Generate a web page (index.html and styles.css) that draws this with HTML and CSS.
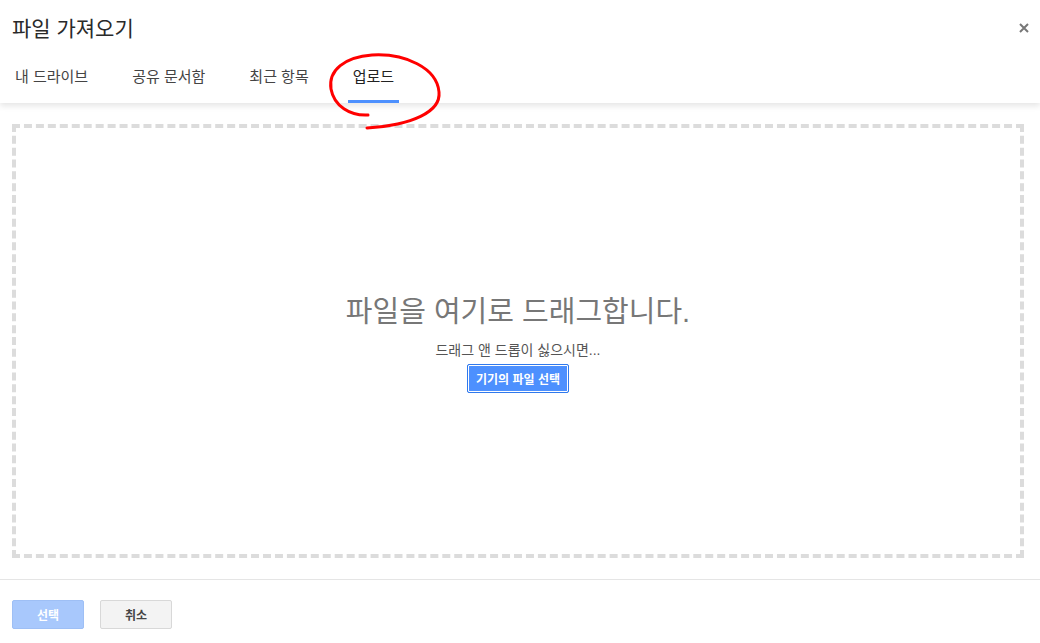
FILE: index.html
```html
<!DOCTYPE html>
<html lang="ko">
<head>
    <meta charset="UTF-8">
    <title>파일 가져오기</title>
    <link rel="stylesheet" href="styles.css">
</head>
<body>
    <div class="dialog">
        <!-- 상단 -->
        <div class="header">
            <div class="title-row">
                <div class="title">파일 가져오기</div>
                <button class="close" aria-label="닫기">
                    <svg width="10" height="10" viewBox="0 0 10 10"><path d="M1 1L9 9M9 1L1 9" stroke="#777" stroke-width="2"/></svg>
                </button>
            </div>
            <div class="tabs">
                <div class="tab">내 드라이브</div>
                <div class="tab">공유 문서함</div>
                <div class="tab">최근 항목</div>
                <div class="tab active">업로드</div>
            </div>
        </div>

        <!-- 업로드 영역 -->
        <div class="main">
            <div class="dropzone">
                <div class="drop-title">파일을 여기로 드래그합니다.</div>
                <div class="drop-sub">드래그 앤 드롭이 싫으시면...</div>
                <button class="pick">기기의 파일 선택</button>
            </div>
        </div>

        <!-- 하단 버튼 -->
        <div class="footer">
            <button class="btn btn-select" disabled>선택</button>
            <button class="btn btn-cancel">취소</button>
        </div>

        <!-- 빨간 표시 -->
        <svg class="mark" width="1040" height="643" viewBox="0 0 1040 643">
            <path d="M368 115 C350 116 334 106 331 89 C328 70 345 57 372 55 C405 53 437 68 439 92 C441 112 412 125 367 128" fill="none" stroke="#f00" stroke-width="3" stroke-linecap="round"/>
        </svg>
    </div>
</body>
</html>
```

FILE: styles.css
```css
body {
    margin: 0;
    padding: 0;
    background: #fff;
    font-family: "Liberation Sans", "Noto Sans CJK KR", Arial, sans-serif;
    overflow: hidden;
}

.dialog {
    position: relative;
    width: 1040px;
    height: 643px;
    display: flex;
    flex-direction: column;
}

/* 상단 */
.header {
    position: relative;
    z-index: 2;
    height: 103px;
    background: #fff;
    box-shadow: 0 3px 6px rgba(0, 0, 0, 0.1);
    display: flex;
    flex-direction: column;
}

.title-row {
    display: flex;
    align-items: center;
    justify-content: space-between;
    padding: 15px 7px 0 12px;
}

.title {
    font-size: 21px;
    line-height: 28px;
    color: #2a2a2a;
}

.close {
    border: none;
    background: none;
    padding: 4px;
    margin-top: -2px;
    cursor: pointer;
    line-height: 0;
}

.tabs {
    display: flex;
    gap: 34px;
    margin-top: auto;
    padding-left: 10px;
}

.tab {
    padding: 0 5px 13px;
    font-size: 15px;
    line-height: 20px;
    color: #444;
    border-bottom: 3px solid transparent;
}

.tab.active {
    color: #222;
    border-bottom-color: #4d90fe;
}

/* 업로드 영역 */
.main {
    padding: 21px 16px 21px 12px;
    height: 434px;
}

.dropzone {
    box-sizing: border-box;
    height: 434px;
    border: 4px dashed #dcdcdc;
    display: flex;
    flex-direction: column;
    align-items: center;
    justify-content: center;
    padding-top: 4px;
}

.drop-title {
    font-size: 29px;
    line-height: 36px;
    color: #777;
}

.drop-sub {
    margin-top: 12px;
    font-size: 14px;
    line-height: 17px;
    color: #555;
}

.pick {
    margin-top: 5px;
    height: 29px;
    padding: 0 8px;
    border: 1px solid #3079ed;
    box-shadow: inset 0 0 0 1px #fff;
    border-radius: 2px;
    background: #4d90fe;
    color: #fff;
    font-family: inherit;
    font-size: 12px;
    font-weight: bold;
    cursor: pointer;
}

/* 하단 */
.footer {
    border-top: 1px solid #e5e5e5;
    display: flex;
    gap: 16px;
    padding: 20px 12px 0;
}

.btn {
    width: 72px;
    height: 29px;
    border-radius: 2px;
    font-family: inherit;
    font-size: 12px;
    font-weight: bold;
    cursor: pointer;
}

.btn-select {
    background: #a8c8fc;
    border: 1px solid #9ebff5;
    color: #fff;
    cursor: default;
}

.btn-cancel {
    background: #f3f3f3;
    border: 1px solid #d8d8d8;
    color: #444;
}

/* 빨간 표시 */
.mark {
    position: absolute;
    left: 0;
    top: 0;
    z-index: 5;
    pointer-events: none;
}
```
